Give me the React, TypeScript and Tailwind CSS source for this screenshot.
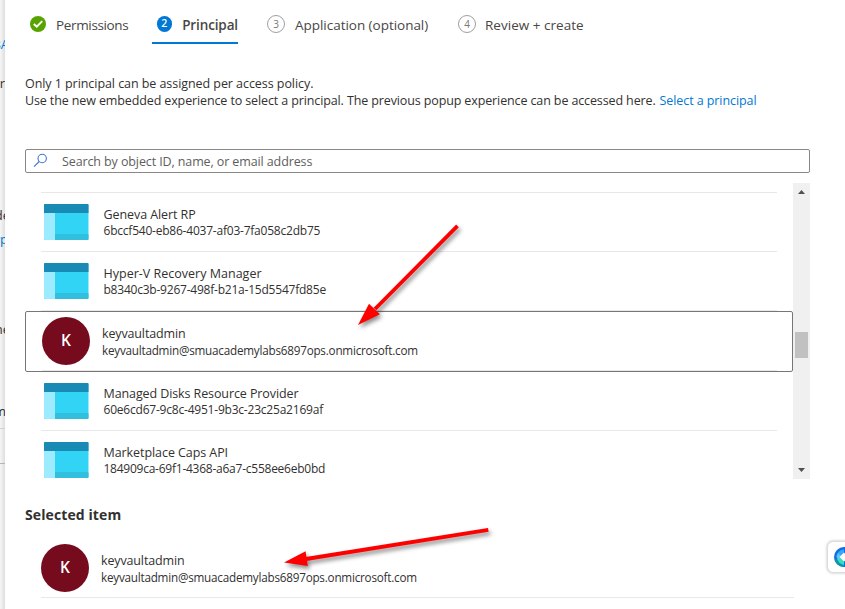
import type { ReactNode } from "react";

function AppIcon() {
  return (
    <svg width="46" height="36" viewBox="0 0 46 36" className="shrink-0">
      <rect x="1" y="0" width="44.5" height="36" rx="1" fill="#32d4f5" />
      <rect x="1" y="30" width="44.5" height="6" rx="1" fill="#32bedd" />
      <path d="M1 9H12V36H2Q1 36 1 35Z" fill="#9cebff" />
      <path d="M1 9V1Q1 0 2 0H44.5Q45.5 0 45.5 1V9Z" fill="#198ab3" />
    </svg>
  );
}

function Avatar() {
  return (
    <div className="flex size-12 shrink-0 items-center justify-center rounded-full bg-[#750b1c] text-[15.5px] font-semibold text-white">
      K
    </div>
  );
}

function Lines({ name, id, nameClass, idClass }: { name: string; id: string; nameClass: string; idClass: string }) {
  return (
    <div className="text-[#323130]">
      <div className={`h-4 text-[12.5px] leading-4 ${nameClass}`}>{name}</div>
      <div className={`h-4 leading-4 ${idClass}`}>{id}</div>
    </div>
  );
}

function AppRow(props: { name: string; id: string; nameClass: string; idClass: string; last?: boolean }) {
  return (
    <div className={`ml-4 flex h-[59px] w-[736px] items-start border-b pl-0.5 pt-[11px] ${props.last ? "border-transparent" : "border-[#e8e8e8]"}`}>
      <AppIcon />
      <div className="pl-[14.5px] pt-[3px]">
        <Lines {...props} />
      </div>
    </div>
  );
}

function Step({ children, className }: { children: ReactNode; className: string }) {
  return <div className={`flex h-11 shrink-0 items-center pt-1 text-[13.5px] text-[#484644] ${className}`}>{children}</div>;
}

function BehindText({ children, className }: { children: ReactNode; className: string }) {
  return <div className={`flex w-full justify-end text-[13px] leading-4 ${className}`}>{children}</div>;
}

function Arrow({ className, w, h, shaft, head }: { className: string; w: number; h: number; shaft: string; head: string }) {
  return (
    <svg width={w} height={h} viewBox={`0 0 ${w} ${h}`} className={`absolute overflow-visible drop-shadow-[2px_3px_2px_rgba(0,0,0,0.45)] ${className}`}>
      <path d={shaft} stroke="#ff0000" strokeWidth="3.8" />
      <path d={head} fill="#ff0000" />
    </svg>
  );
}

export default function App() {
  return (
    <div className="relative flex h-[609px] w-[845px] overflow-hidden whitespace-nowrap bg-white font-['Open_Sans','Noto_Sans',sans-serif]">
      <div className="flex w-[5px] shrink-0 flex-col overflow-hidden bg-linear-to-r from-[#f6f6f6] to-[#dedede]">
        <BehindText className="mt-[36px] text-[#0078d4]"><span className="-mr-1">BA</span></BehindText>
        <BehindText className="mt-[23px] text-[#323130]">ar</BehindText>
        <BehindText className="mt-[116px] text-[#323130]"><span className="-mr-[5px]">de</span></BehindText>
        <BehindText className="mt-[8px] text-[#0078d4]"><span className="-mr-[3px]">yp</span></BehindText>
        <BehindText className="mt-[74px] text-[#323130]"><span className="-mr-[5px]">ne</span></BehindText>
        <BehindText className="mt-[66px] text-[#323130]"><span className="-mr-[1px]">m</span></BehindText>
        <div className="mt-[9px] h-[36px] shrink-0 border-y border-t-[#d2d2d2] border-b-[#b5b5b5]" />
      </div>

      <main className="flex min-w-0 flex-1 flex-col bg-white pl-5">
        <nav className="flex h-11 shrink-0">
          <Step className="w-[127px] pl-[5px]">
            <svg width="16" height="16" viewBox="0 0 16 16">
              <circle cx="8" cy="8" r="8" fill="#57a300" />
              <path d="M3.8 7.9L6.8 10.7L12.2 5.1" fill="none" stroke="white" strokeWidth="2" />
            </svg>
            <span className="pl-[10px] pt-0.5 tracking-[-0.35px]">Permissions</span>
          </Step>
          <Step className="w-[86px] border-b-2 border-[#0078d4] pl-[5px] font-semibold text-[#323130]">
            <span className="mt-0.5 flex size-4 items-center justify-center rounded-full bg-[#0078d4] text-[10.5px] text-white">2</span>
            <span className="pl-[10.5px] pt-1 tracking-[-0.12px]">Principal</span>
          </Step>
          <Step className="ml-[29px] w-[190px]">
            <span className="flex size-[18px] items-center justify-center rounded-full border border-[#a19f9d] text-[10px] text-[#797775]">3</span>
            <span className="pl-[10px] pt-0.5 tracking-[-0.03px]">Application (optional)</span>
          </Step>
          <Step className="w-[130px] pl-px">
            <span className="flex size-[18px] items-center justify-center rounded-full border border-[#a19f9d] text-[10px] text-[#797775]">4</span>
            <span className="pl-[9px] pt-0.5 tracking-[0.02px]">Review + create</span>
          </Step>
        </nav>

        <div className="mt-[31px] h-[34px] text-[12.5px] leading-[17px] text-[#323130]">
          <p className="tracking-[-0.06px]">Only 1 principal can be assigned per access policy.</p>
          <p className="flex">
            <span className="w-[634.5px] tracking-[-0.12px]">Use the new embedded experience to select a principal. The previous popup experience can be accessed here.</span>
            <a className="tracking-[-0.08px] text-[#0078d4]">Select a principal</a>
          </p>
        </div>

        <div className="mt-10 flex h-6 w-[785px] items-center rounded-[2px] border border-[#8a8886] pl-[7px] text-[12.5px] tracking-[-0.11px] text-[#605e5c]">
          <svg width="15" height="15" viewBox="0 0 15 15" fill="none" stroke="#3f76cf" strokeWidth="1.1" className="-mt-0.5">
            <circle cx="9.2" cy="5.5" r="4.2" />
            <path d="M6.2 8.5L1 13.7" />
          </svg>
          <span className="pl-[14px] pt-0.5">Search by object ID, name, or email address</span>
        </div>

        <section className="mt-[10px] flex h-[296px] w-[785px] shrink-0">
          <div className="w-[768px] overflow-hidden pt-[9px]">
            <div className="ml-4 h-px w-[736px] bg-[#e8e8e8]" />
            <AppRow name="Geneva Alert RP" id="6bccf540-eb86-4037-af03-7fa058c2db75" nameClass="tracking-[-0.08px]" idClass="text-[12px] tracking-[-0.22px]" />
            <AppRow name="Hyper-V Recovery Manager" id="b8340c3b-9267-498f-b21a-15d5547fd85e" nameClass="tracking-[0.01px]" idClass="text-[12px] tracking-[-0.22px]" />
            <div className="h-[61px] w-[768px] rounded-[2px] border border-[#797775] pl-4">
              <div className="flex h-[59px] w-[735px] items-start border-b border-[#e8e8e8] pt-[5px]">
                <Avatar />
                <div className="pl-3 pt-[9px]">
                  <Lines name="keyvaultadmin" id="keyvaultadmin@smuacademylabs6897ops.onmicrosoft.com" nameClass="tracking-[-0.14px]" idClass="text-[11.7px] tracking-[-0.22px]" />
                </div>
              </div>
            </div>
            <AppRow name="Managed Disks Resource Provider" id="60e6cd67-9c8c-4951-9b3c-23c25a2169af" nameClass="tracking-[-0.1px]" idClass="text-[12px] tracking-[-0.21px]" />
            <AppRow last name="Marketplace Caps API" id="184909ca-69f1-4368-a6a7-c558ee6eb0bd" nameClass="tracking-[-0.07px]" idClass="text-[12px] tracking-[-0.245px]" />
          </div>
          <div className="flex w-[17px] flex-col items-center bg-[#f0f0f0]">
            <svg width="17" height="17" viewBox="0 0 17 17"><path d="M5 11L8.5 7L12 11Z" fill="#505050" /></svg>
            <div className="mt-[132px] h-[26px] w-[13px] bg-[#c1c1c1]" />
            <svg width="17" height="17" viewBox="0 0 17 17" className="mt-auto"><path d="M5 6L8.5 10L12 6Z" fill="#505050" /></svg>
          </div>
        </section>

        <h2 className="mt-[26px] h-5 text-[14px] font-bold leading-5 tracking-[0.1px] text-[#323130]">Selected item</h2>
        <div className="ml-4 mt-[19px] flex h-[54px] w-[753px] shrink-0 border-b border-[#e8e8e8]">
          <Avatar />
          <div className="pl-3 pt-[9px]">
            <Lines name="keyvaultadmin" id="keyvaultadmin@smuacademylabs6897ops.onmicrosoft.com" nameClass="tracking-[-0.14px]" idClass="text-[11.7px] tracking-[-0.22px]" />
          </div>
        </div>
      </main>

      <Arrow className="left-[358px] top-[225px]" w={100} h={100} shaft="M99.5 0.9L17 84" head="M0 100L11 78.7L21.9 89.3Z" />
      <Arrow className="left-[284px] top-[529px]" w={205} h={38} shaft="M204.3 0.9L22 30" head="M0 33.5L21.6 22.3L23.8 37Z" />

      <div className="absolute left-[827px] top-[541px] flex h-8 w-10 items-center rounded-md border border-[#dcdcdc] bg-white pl-[6px] shadow-[0_0_3px_rgba(0,0,0,0.25)]">
        <svg width="20" height="20" viewBox="0 0 20 20">
          <circle cx="10" cy="10" r="10" fill="#0f6fde" />
          <path d="M0.5 12A10 10 0 0 0 10 20V13Z" fill="#1493a5" />
          <path d="M10 2.5A7.5 7.5 0 0 0 2.5 10L6 12L10 8Z" fill="#35a8fb" />
          <path d="M3 10A8 8 0 0 0 10 18V13L5 9Z" fill="#2ee0c4" />
          <path d="M2.5 10A8 8 0 0 1 4 6L7 9L5 13Z" fill="#5fc4ff" />
          <path d="M5.5 10L10 5.5L14.5 10L10 14.5Z" fill="white" />
        </svg>
      </div>
    </div>
  );
}
